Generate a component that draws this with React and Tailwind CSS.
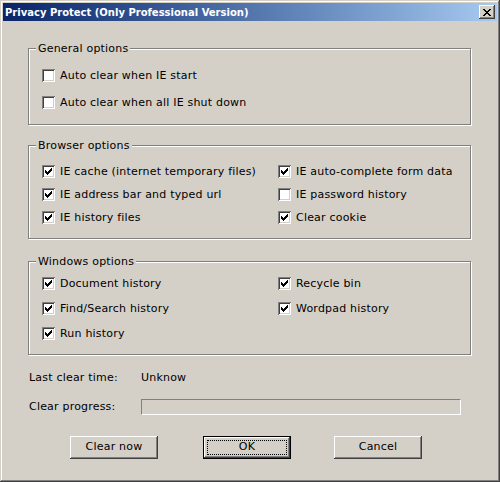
import React from "react";

const font = { fontFamily: '"DejaVu Sans", Verdana, sans-serif' };

function Check() {
  const cols = [2, 3, 4, 3, 2, 1, 0];
  return (
    <svg width="13" height="13" viewBox="0 0 13 13" shapeRendering="crispEdges" className="absolute left-0 top-0">
      {cols.map((y, i) => (
        <rect key={i} x={3 + i} y={3 + y} width="1" height="3" fill="#000" />
      ))}
    </svg>
  );
}

function CheckBox({ checked, label }) {
  return (
    <div className="flex items-center h-[13px]">
      <div className="relative w-[13px] h-[13px] shrink-0 bg-white shadow-[inset_1px_1px_0_#808080,inset_-1px_-1px_0_#fff,inset_2px_2px_0_#404040,inset_-2px_-2px_0_#d4d0c8]">
        {checked && <Check />}
      </div>
      <span className="ml-[5px] text-[11px] tracking-[0.2px] leading-[13px] text-black whitespace-nowrap">{label}</span>
    </div>
  );
}

function Group({ title, className, children }) {
  return (
    <div className={"relative w-[443px] border border-[#808080] shadow-[inset_1px_1px_0_#fff,1px_1px_0_#fff] " + className}>
      <span className="absolute left-[7px] -top-[7px] px-[2px] bg-[#d4d0c8] text-[11px] tracking-[0.2px] leading-[13px] text-black whitespace-nowrap">
        {title}
      </span>
      {children}
    </div>
  );
}

function Button({ children, def }) {
  if (def) {
    return (
      <div className="relative w-[88px] h-[23px] border border-black bg-[#d4d0c8] shadow-[inset_-1px_-1px_0_#404040,inset_1px_1px_0_#fff,inset_-2px_-2px_0_#808080] flex items-center justify-center text-[11px] tracking-[0.2px] text-black">
        <span className="absolute left-[3px] top-[3px] right-[3px] bottom-[3px] border border-dotted border-black" />
        <span className="relative">{children}</span>
      </div>
    );
  }
  return (
    <div className="w-[88px] h-[23px] bg-[#d4d0c8] shadow-[inset_-1px_-1px_0_#404040,inset_1px_1px_0_#fff,inset_-2px_-2px_0_#808080] flex items-center justify-center text-[11px] tracking-[0.2px] text-black">
      {children}
    </div>
  );
}

export default function App() {
  return (
    <div
      style={font}
      className="w-[500px] h-[482px] bg-[#d4d0c8] p-[3px] flex flex-col shadow-[inset_-1px_-1px_0_#404040,inset_1px_1px_0_#d4d0c8,inset_-2px_-2px_0_#808080,inset_2px_2px_0_#fff]"
    >
      {/* Title bar */}
      <div className="h-[18px] flex items-center justify-between bg-gradient-to-r from-[#0a246a] to-[#a6caf0] pl-[2px] pr-[2px]">
        <span className="text-white font-bold text-[10px] leading-[13px] whitespace-nowrap">
          Privacy Protect (Only Professional Version)
        </span>
        <div className="w-[16px] h-[14px] bg-[#d4d0c8] shadow-[inset_-1px_-1px_0_#404040,inset_1px_1px_0_#fff,inset_-2px_-2px_0_#808080] flex items-center justify-center">
          <svg width="8" height="7" viewBox="0 0 8 7" shapeRendering="crispEdges">
            <path d="M0 0h2v1h-2zM6 0h2v1h-2zM1 1h2v1h-2zM5 1h2v1h-2zM2 2h4v1h-4zM3 3h2v1h-2zM2 4h4v1h-4zM1 5h2v1h-2zM5 5h2v1h-2zM0 6h2v1h-2zM6 6h2v1h-2z" fill="#000" />
          </svg>
        </div>
      </div>

      {/* Client */}
      <div className="flex flex-col pl-[25px] pt-[27px]">
        <Group title="General options" className="h-[77px]">
          <div className="flex flex-col gap-[14px] pl-[13px] pt-[20px]">
            <CheckBox label="Auto clear when IE start" />
            <CheckBox label="Auto clear when all IE shut down" />
          </div>
        </Group>

        <Group title="Browser options" className="h-[94px] mt-[20px]">
          <div className="grid grid-cols-[236px_1fr] gap-y-[10px] pl-[13px] pt-[19px]">
            <CheckBox checked label="IE cache (internet temporary files)" />
            <CheckBox checked label="IE auto-complete form data" />
            <CheckBox checked label="IE address bar and typed url" />
            <CheckBox label="IE password history" />
            <CheckBox checked label="IE history files" />
            <CheckBox checked label="Clear cookie" />
          </div>
        </Group>

        <Group title="Windows options" className="h-[94px] mt-[22px]">
          <div className="grid grid-cols-[236px_1fr] gap-y-[12px] pl-[13px] pt-[15px]">
            <CheckBox checked label="Document history" />
            <CheckBox checked label="Recycle bin" />
            <CheckBox checked label="Find/Search history" />
            <CheckBox checked label="Wordpad history" />
            <CheckBox checked label="Run history" />
          </div>
        </Group>

        <div className="flex items-center h-[16px] mt-[15px] text-[11px] tracking-[0.2px] text-black">
          <span className="w-[113px] pl-[1px]">Last clear time:</span>
          <span>Unknow</span>
        </div>

        <div className="flex items-center h-[16px] mt-[13px] text-[11px] tracking-[0.2px] text-black">
          <span className="w-[113px] pl-[1px]">Clear progress:</span>
          <div className="w-[320px] h-[16px] border border-t-[#808080] border-l-[#808080] border-b-white border-r-white bg-[#d4d0c8]" />
        </div>

        <div className="flex mt-[21px]">
          <div className="ml-[42px]"><Button>Clear now</Button></div>
          <div className="ml-[45px]"><Button def>OK</Button></div>
          <div className="ml-[43px]"><Button>Cancel</Button></div>
        </div>
      </div>
    </div>
  );
}
